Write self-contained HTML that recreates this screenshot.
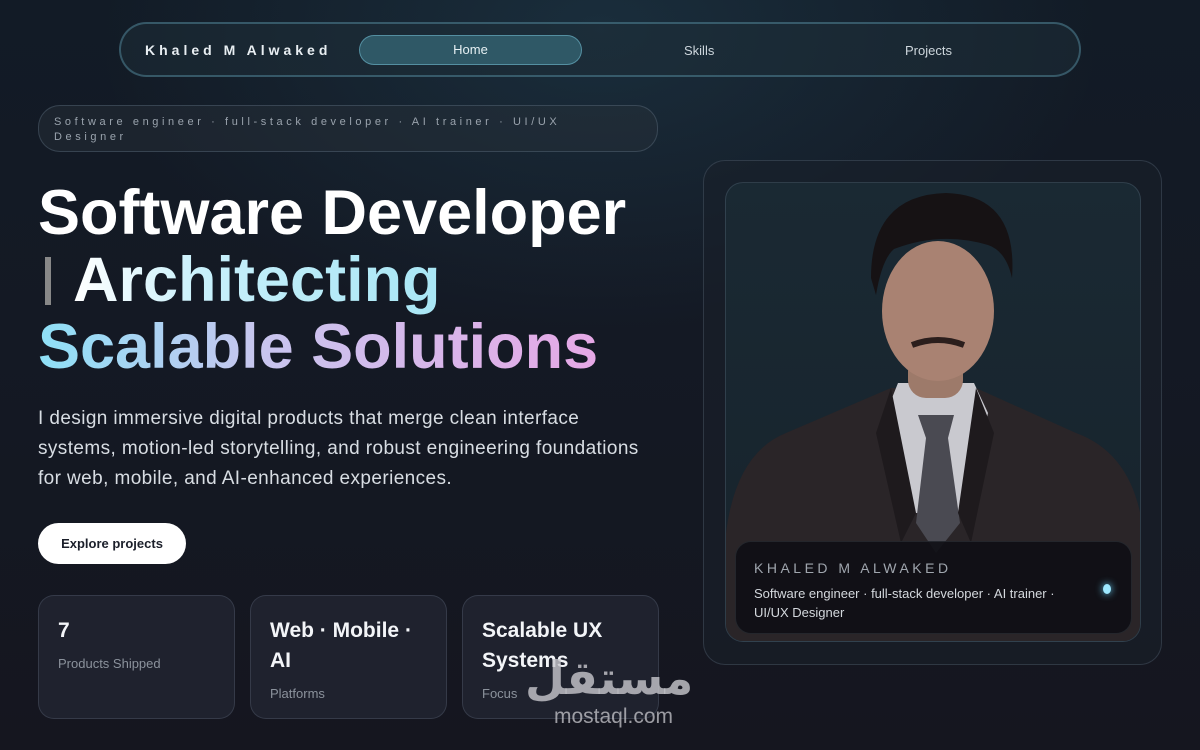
<!DOCTYPE html>
<html><head><meta charset="utf-8"><style>
*{margin:0;padding:0;box-sizing:border-box}
body{width:1200px;height:750px;overflow:hidden;font-family:"Liberation Sans",sans-serif;color:#fff;
background:radial-gradient(ellipse 500px 300px at 600px 30px,rgba(40,80,100,.35),transparent),linear-gradient(180deg,#121b26 0%,#141924 45%,#15161f 100%);position:relative}
.nav{position:absolute;left:119px;top:22px;width:962px;height:55px;border:2px solid rgba(90,150,170,.45);border-radius:28px;background:rgba(30,45,55,.5)}
.brand{position:absolute;left:24px;top:18px;font-size:14px;font-weight:bold;letter-spacing:4px;color:#e8eef2}
.home{position:absolute;left:238px;top:11px;width:223px;height:30px;border:1px solid rgba(110,180,200,.6);border-radius:15px;background:#2f5866;font-size:13px;text-align:center;line-height:28px;color:#e6f0f3}
.nl{position:absolute;top:19px;font-size:13px;color:#cdd6dc}
.pill{position:absolute;left:38px;top:105px;width:620px;height:47px;border:1px solid rgba(120,140,160,.3);border-radius:22px;background:rgba(40,48,58,.45);padding:9px 15px;font-size:11px;letter-spacing:3.6px;line-height:15px;color:#9aa3ad}
.pill div{width:580px}
h1{position:absolute;left:38px;top:180px;font-size:63px;line-height:67px;font-weight:bold;letter-spacing:0}
.g1{background:linear-gradient(90deg,#ffffff 0%,#c8f0fb 35%,#a8e6f5 100%);-webkit-background-clip:text;color:transparent}
.g2{background:linear-gradient(90deg,#8ee0f6 0%,#c8c5ee 40%,#e6a8e6 100%);-webkit-background-clip:text;color:transparent}
.bar{display:inline-block;width:6px;height:48px;background:#888;vertical-align:-4px;margin-right:22px;margin-left:7px}
p.lead{position:absolute;left:38px;top:404px;width:620px;font-size:19px;letter-spacing:.4px;line-height:30px;color:#d8dde3}
.btn{position:absolute;left:38px;top:523px;width:148px;height:41px;border-radius:21px;background:#fff;color:#1b1f2a;font-size:13px;font-weight:bold;text-align:center;line-height:41px}
.card{position:absolute;top:595px;width:197px;height:124px;border:1px solid rgba(120,130,150,.25);border-radius:16px;background:rgba(34,38,50,.8);padding:20px 19px}
.card b{display:block;font-size:21px;line-height:30px;font-weight:bold;color:#f3f5f8}
.card span{display:block;margin-top:10px;font-size:13px;color:#8b929c}
.frame{position:absolute;left:703px;top:160px;width:459px;height:505px;border:1px solid rgba(120,140,160,.25);border-radius:22px;background:rgba(25,32,42,.6)}
.inner{position:absolute;left:725px;top:182px;width:416px;height:460px;border:1px solid rgba(120,140,160,.25);border-radius:18px;background:linear-gradient(180deg,#1a2933,#17232c);overflow:hidden}
.cap{position:absolute;left:735px;top:541px;width:397px;height:93px;border-radius:16px;background:rgba(14,14,20,.9);border:1px solid rgba(80,90,100,.3);padding:18px 18px}
.cap .t{font-size:14px;letter-spacing:3.5px;color:#a0a6ae}
.cap .s{margin-top:8px;font-size:13px;line-height:19px;color:#d4d8dd}
.dot{position:absolute;right:20px;top:42px;width:8px;height:10px;border-radius:50%;background:#9ee8ff;box-shadow:0 0 8px #6cd8ff}
.wm{position:absolute;left:528px;top:704px;width:145px;text-align:right;font-size:21px;line-height:26px;color:rgba(200,200,205,.75)}
.wma{position:absolute;left:525px;top:650px;width:150px;text-align:center;font-size:46px;line-height:56px;font-weight:bold;color:rgba(200,200,205,.8);font-family:"DejaVu Sans",sans-serif}
</style></head><body>
<div class="nav"><div class="brand">Khaled M Alwaked</div><div class="home">Home</div><div class="nl" style="left:563px">Skills</div><div class="nl" style="left:784px">Projects</div></div>
<div class="pill"><div>Software engineer · full-stack developer · AI trainer · UI/UX Designer</div></div>
<h1><span style="color:#fff">Software Developer</span><br><span class="bar"></span><span class="g1">Architecting</span><br><span class="g2">Scalable Solutions</span></h1>
<p class="lead">I design immersive digital products that merge clean interface systems, motion-led storytelling, and robust engineering foundations for web, mobile, and AI-enhanced experiences.</p>
<div class="btn">Explore projects</div>
<div class="card" style="left:38px"><b>7</b><span>Products Shipped</span></div>
<div class="card" style="left:250px"><b>Web · Mobile · AI</b><span>Platforms</span></div>
<div class="card" style="left:462px"><b>Scalable UX Systems</b><span>Focus</span></div>
<div class="frame"></div>
<div class="inner">
<svg width="416" height="460" viewBox="0 0 416 460">
<path d="M0 460 L0 350 Q10 270 60 250 L165 205 L250 205 L350 250 Q405 270 416 340 L416 460Z" fill="#2a2528"/>
<path d="M172 200 L248 200 L262 230 L240 330 L180 330 L160 230Z" fill="#c9c9cf"/>
<path d="M192 232 L228 232 L222 255 L234 340 L210 370 L190 340 L200 255Z" fill="#4a4a52"/>
<path d="M165 205 L190 330 L175 360 L150 250Z M250 205 L232 330 L245 360 L268 250Z" fill="#1e1a1d"/>
<rect x="182" y="170" width="55" height="45" rx="18" fill="#9d7a6a"/>
<ellipse cx="212" cy="128" rx="56" ry="70" fill="#a98272"/>
<path d="M145 95 Q145 12 220 10 Q292 12 286 95 Q280 68 262 62 Q215 48 168 66 Q156 76 150 112Z" fill="#161214"/>
<path d="M186 162 Q212 152 238 162" stroke="#2b1e1c" stroke-width="6" fill="none"/>
</svg>
</div>
<div class="cap"><div class="t">KHALED M ALWAKED</div><div class="s">Software engineer · full-stack developer · AI trainer ·<br>UI/UX Designer</div><div class="dot"></div></div>
<div class="wma">مستقل</div>
<div class="wm">mostaql.com</div>
</body></html>
